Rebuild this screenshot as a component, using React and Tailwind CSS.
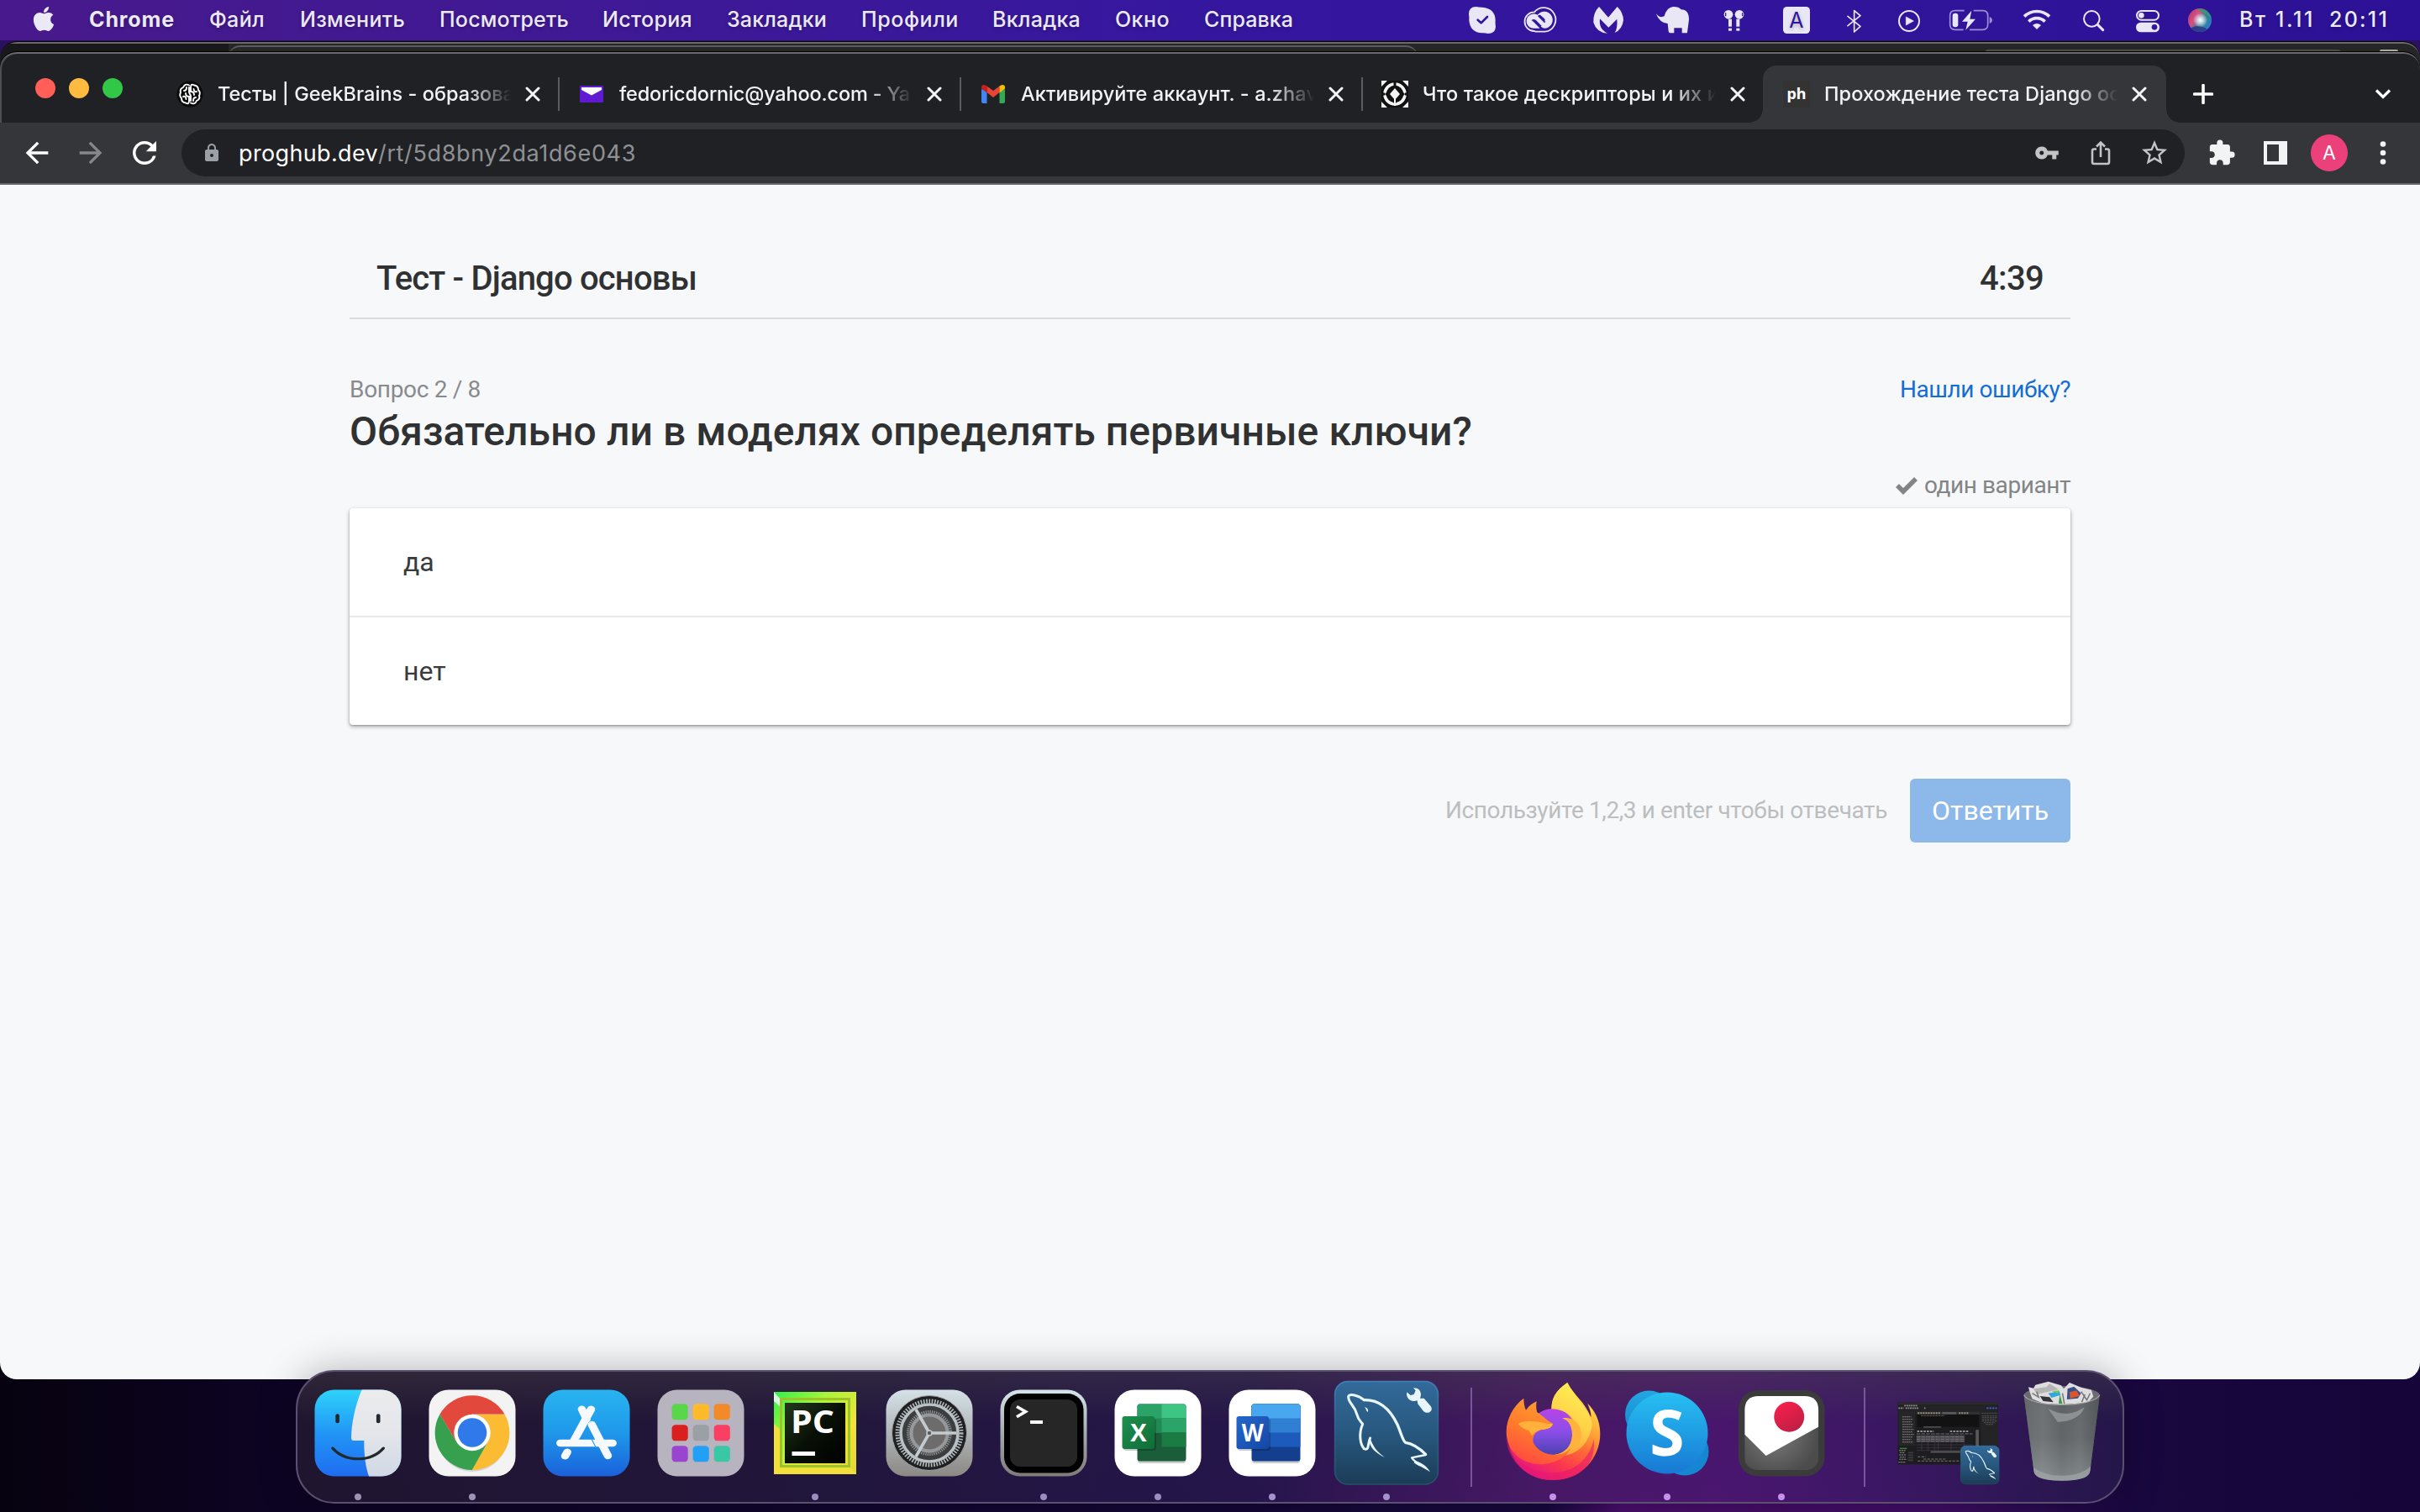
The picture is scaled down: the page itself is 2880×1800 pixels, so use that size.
import { useLayoutEffect, useRef, useState } from "react";
import { FaApple } from "react-icons/fa";
import {
  MdArrowBack,
  MdArrowForward,
  MdRefresh,
  MdLock,
  MdVpnKey,
  MdStarBorder,
  MdExtension,
} from "react-icons/md";

/* One line of text whose tracking is adjusted so that it fills `width` pixels. */
function Fit({ width, className = "", children }) {
  const ref = useRef(null);
  const [spacing, setSpacing] = useState(0);
  useLayoutEffect(() => {
    const natural = ref.current.getBoundingClientRect().width;
    const count = String(children).length;
    setSpacing((width - natural) / count);
  }, [width, children]);
  return (
    <span className={"block shrink-0 " + className} style={{ width }}>
      <span ref={ref} className="inline-block whitespace-pre" style={{ letterSpacing: spacing + "px" }}>
        {children}
      </span>
    </span>
  );
}

const MENU = [
  { t: "Chrome", w: 102, gap: 41, bold: true },
  { t: "Файл", w: 66, gap: 42 },
  { t: "Изменить", w: 125, gap: 41 },
  { t: "Посмотреть", w: 154, gap: 40 },
  { t: "История", w: 107, gap: 41 },
  { t: "Закладки", w: 119, gap: 41 },
  { t: "Профили", w: 116, gap: 40 },
  { t: "Вкладка", w: 105, gap: 41 },
  { t: "Окно", w: 65, gap: 41 },
  { t: "Справка", w: 106, gap: 0 },
];

/* Status icon cell; the view box uses screen coordinates. */
function Status({ x, w, o, children }) {
  return (
    <svg width={w} height="48" viewBox={`${x} 0 ${w} 48`} className="shrink-0">
      <g transform={`translate(${o} 0) scale(0.33333)`} fill="#e9e6f5">
        {children}
      </g>
    </svg>
  );
}

function MenuBar() {
  return (
    <div className="flex h-12 shrink-0 items-center bg-linear-to-r from-[#48198c] via-[#35179f] to-[#2c1196] font-['Inter',sans-serif] text-[25px] leading-[46px] text-[#ece9f6] [text-shadow:0_2px_4px_rgba(0,0,0,0.25)]">
      <FaApple className="mr-[39px] ml-[37px] h-[33px] w-[30px] shrink-0 -translate-y-[2px]" />
      {MENU.map((m) => (
        <div key={m.t} className="flex h-12 shrink-0">
          <Fit width={m.w} className={m.bold ? "font-bold" : "font-medium"}>
            {m.t}
          </Fit>
          <span style={{ width: m.gap }} />
        </div>
      ))}
      <div className="ml-auto flex h-12 w-[1150px] shrink-0 items-start">
        <Status x={1730} w={68} o={1740}>
          <path d="M24 50Q24 24 50 24Q60 26 72 26Q118 30 119 72Q118 84 120 96Q118 120 92 120Q82 117 72 118Q28 116 25 72Q26 62 24 50Z" />
          <path d="M56 71L68 82L90 60" fill="none" stroke="#3015a0" strokeWidth="8" strokeLinecap="round" strokeLinejoin="round" />
        </Status>
        <Status x={1798} w={76} o={1740}>
          <path d="M257 111A34 34 0 0 1 258 43A43 43 0 1 1 296 113H262Z" fill="none" stroke="#e9e6f5" strokeWidth="5.500" />
          <path d="M268 55A30 30 0 1 1 296 101Q288 101 282 95L262 75Q256 70 252 75L278 101H260A26 26 0 1 1 272 55L294 76Q299 72 294 67L279 53Z" />
          <path d="M296 80L272 56M282 94L262 74Q255 69 250 74" fill="none" stroke="#3015a0" strokeWidth="5" />
        </Status>
        <Status x={1874} w={78} o={1740}>
          <path d="M489 24L522 62L554 24Q575 44 576 72Q572 105 545 117Q556 100 553 68L523 98L492 67Q487 104 519 119Q480 116 469 80Q467 46 489 24Z" />
        </Status>
        <Status x={1952} w={78} o={1740}>
          <path d="M692 48Q705 66 722 58Q730 26 754 24Q775 24 782 34Q810 34 810 70L804 116Q804 118 800 118H785V100H757V118H743Q738 118 737 112L734 84Q705 82 692 48Z" />
        </Status>
        <Status x={2030} w={70} o={1740}>
          <circle cx="951" cy="52" r="16" />
          <circle cx="990" cy="52" r="16" />
          <rect x="951" y="68" width="12" height="27" />
          <rect x="979" y="68" width="12" height="27" />
          <rect x="951" y="101" width="12" height="9" />
          <rect x="979" y="101" width="12" height="9" />
          <path d="M941 46V58M1001 46V58" stroke="#3015a0" strokeWidth="4" />
        </Status>
        <Status x={2100} w={72} o={1740}>
          <rect x="1146" y="24" width="96" height="96" rx="14" />
          <text x="1194" y="99" textAnchor="middle" fontSize="75" fill="#3015a0" className="font-['Inter',sans-serif]">
            A
          </text>
        </Status>
        <Status x={2172} w={68} o={1740}>
          <path d="M1377 58L1422 94L1400 114V38L1422 56L1377 92" fill="none" stroke="#e9e6f5" strokeWidth="5" strokeLinejoin="round" strokeLinecap="round" />
        </Status>
        <Status x={2240} w={62} o={2230}>
          <circle cx="126" cy="75" r="36" fill="none" stroke="#e9e6f5" strokeWidth="6" />
          <path d="M115 60L142 75L115 90Z" strokeLinejoin="round" stroke="#e9e6f5" strokeWidth="2" />
        </Status>
        <Status x={2302} w={88} o={2230}>
          <path d="M323 38H290Q272 38 272 56V88Q272 106 290 106H320M356 38H389Q407 38 407 56V88Q407 106 389 106H342" fill="none" stroke="#9c8fd2" strokeWidth="5" />
          <path d="M413 60Q423 64 423 72Q423 80 413 84Z" fill="#9c8fd2" />
          <rect x="281" y="47" width="20" height="50" rx="9" />
          <path d="M349 38L315 77H335L328 107L363 68H343Z" />
        </Status>
        <Status x={2390} w={68} o={2230}>
          <g fill="none" stroke="#e9e6f5" strokeWidth="11">
            <path d="M537 59A64 64 0 0 1 627 59" />
            <path d="M553 77A41 41 0 0 1 611 77" />
          </g>
          <path d="M567 90Q582 78 597 90L582 105Z" />
        </Status>
        <Status x={2458} w={66} o={2230}>
          <circle cx="778" cy="67" r="28" fill="none" stroke="#e9e6f5" strokeWidth="6" />
          <path d="M799 88L818 107" stroke="#e9e6f5" strokeWidth="9" strokeLinecap="round" />
        </Status>
        <Status x={2524} w={63} o={2230}>
          <rect x="939" y="39" width="78" height="32" rx="16" fill="none" stroke="#e9e6f5" strokeWidth="6" />
          <circle cx="955" cy="55" r="10" />
          <rect x="936" y="80" width="84" height="35" rx="17" />
          <circle cx="1002" cy="97" r="10" fill="#3015a0" />
        </Status>
        <Status x={2587} w={78} o={2230}>
          <defs>
            <radialGradient id="siriGlow">
              <stop offset="0" stopColor="#fff" />
              <stop offset="0.35" stopColor="#e8f4ff" stopOpacity="0.8" />
              <stop offset="1" stopColor="#fff" stopOpacity="0" />
            </radialGradient>
            <linearGradient id="siriBody" x1="0" x2="1" y1="0.2" y2="0.8">
              <stop offset="0" stopColor="#b03a78" />
              <stop offset="0.3" stopColor="#d8507e" />
              <stop offset="0.6" stopColor="#2f7f8c" />
              <stop offset="1" stopColor="#2a7fd0" />
            </linearGradient>
          </defs>
          <circle cx="1164" cy="72" r="42" fill="url(#siriBody)" />
          <path d="M1150 34A42 42 0 0 1 1204 66Q1180 40 1150 34Z" fill="#2f9a76" />
          <path d="M1132 100A42 42 0 0 0 1190 104Q1160 84 1132 100Z" fill="#2b3f8c" />
          <circle cx="1166" cy="72" r="26" fill="url(#siriGlow)" />
        </Status>
        <Fit width={90} className="font-medium">Вт 1.11</Fit>
        <Fit width={71} className="ml-[17px] font-medium">20:11</Fit>
      </div>
    </div>
  );
}

function BackWindow() {
  return (
    <div className="h-10 shrink-0 bg-[#2b1060] pt-px">
      <div className="h-full overflow-hidden rounded-t-[20px] border-t border-black bg-[#262626]">
        <div className="flex h-full rounded-t-[20px] border-t-2 border-[#6a6a6a]">
          <div className="h-full w-[272px] bg-[#18181b]" />
          <div className="mt-[2px] h-full w-[1415px] rounded-t-[14px] border-t-2 border-[#5c5c5c] bg-[#272727]" />
          <div className="mt-[7px] ml-[675px] h-full w-[424px] rounded-t-[4px] bg-[#4c4c4c]" />
          <div className="mt-[7px] ml-[46px] h-full w-[22px] rounded-t-[2px] bg-[#aaaaaa]" />
        </div>
      </div>
    </div>
  );
}

function Brain() {
  return (
    <svg viewBox="0 0 32 32" className="size-8">
      <circle cx="16" cy="16" r="15.500" fill="#0b0b0c" />
      <g fill="none" stroke="#fff" strokeWidth="1.900" strokeLinecap="round">
        <path d="M15 5.500Q10 3 8 8Q3.500 10 5 14Q3 18 6 21Q6 26 11 26.500Q15 29 15 24V19Q11 19 11 15" />
        <path d="M17 26.500Q22 29 24 24Q28.500 22 27 18Q29 14 26 11Q26 6 21 5.500Q17 3 17 8V13Q21 13 21 17" />
        <path d="M9 12Q12 12 12 8M8 19Q11 18 11.500 22M23 20Q20 20 20 24M24 13Q21 14 20.500 10M15 8V14L17 18V24" />
      </g>
    </svg>
  );
}

function YahooMail() {
  return (
    <svg viewBox="0 0 32 32" className="size-8">
      <rect x="2" y="6" width="28" height="20" rx="1.500" fill="#5f1bd1" />
      <path d="M4 8H28V11L16 17.500L4 11Z" fill="#fff" />
    </svg>
  );
}

function Gmail() {
  return (
    <svg viewBox="0 0 32 32" className="size-8">
      <path d="M2 10V25Q2 27 4 27H8.500V13Z" fill="#4285f4" />
      <path d="M23.500 13V27H28Q30 27 30 25V10Z" fill="#34a853" />
      <path d="M8.500 13V6.500L16 12L23.500 6.500V14L16 20L8.500 14Z" fill="#ea4335" />
      <path d="M2 8Q2 5 5 5Q7 5 8.500 6.500V14.500L2 9.500Z" fill="#c5221f" />
      <path d="M30 8Q30 5 27 5Q25 5 23.500 6.500V14.500L30 9.500Z" fill="#fbbc04" />
    </svg>
  );
}

function Descriptor() {
  return (
    <svg viewBox="0 0 32 32" className="size-8">
      <rect width="32" height="32" fill="#111" />
      <path d="M0 0H7L0 7ZM32 0H25L32 7ZM0 32H7L0 25ZM32 32H25L32 25Z" fill="#f4f4f4" />
      <circle cx="16" cy="16" r="12" fill="none" stroke="#f4f4f4" strokeWidth="3.600" />
      <path d="M16 0V5M0 16H4M28 16H32" stroke="#111" strokeWidth="3" />
      <path d="M16 4L28 16L16 28L4 16Z" fill="#111" />
      <path d="M16 9L22 16L16 23L10 16Z" fill="#f4f4f4" />
      <path d="M16 22V30" stroke="#f4f4f4" strokeWidth="2" />
    </svg>
  );
}

function Proghub() {
  return (
    <span className="flex size-8 items-center justify-center bg-[#333333] pb-[3px] font-['Noto_Sans',sans-serif] text-[18px] leading-8 font-bold text-white">
      ph
    </span>
  );
}

function CloseIcon() {
  return (
    <svg viewBox="0 0 18 18" className="size-[18px] shrink-0">
      <path d="M2 2L16 16M16 2L2 16" stroke="#f3f4f5" strokeWidth="3" strokeLinecap="round" />
    </svg>
  );
}

const TABS = [
  { t: "Тесты | GeekBrains - образова", icon: <Brain /> },
  { t: "fedoricdornic@yahoo.com - Ya", icon: <YahooMail /> },
  { t: "Активируйте аккаунт. - a.zhav", icon: <Gmail /> },
  { t: "Что такое дескрипторы и их и", icon: <Descriptor /> },
];

function TabTitle({ children, width = 353 }) {
  return (
    <div className="ml-[17px] h-8 w-[353px] shrink-0 overflow-hidden [mask-image:linear-gradient(to_right,black_84%,transparent_99%)]">
      <Fit width={width} className="font-['Inter',sans-serif] text-[23.5px] leading-8 font-medium text-[#f1f3f4]">
        {children}
      </Fit>
    </div>
  );
}

function TabStrip() {
  return (
    <div className="flex h-[82px] w-full">
      <div className="flex w-[187px] shrink-0 gap-4 pt-[29px] pl-[42px]">
        <span className="size-6 rounded-full bg-[#ff5f57]" />
        <span className="size-6 rounded-full bg-[#febb40]" />
        <span className="size-6 rounded-full bg-[#33c748]" />
      </div>
      {TABS.map((tab, i) => (
        <div key={tab.t} className={(i < 3 ? "w-[478px]" : "w-[477px]") + " flex h-full shrink-0 items-center pt-3.5"}>
          <div className="flex h-10 w-full items-center pl-[23px]">
            {tab.icon}
            <TabTitle width={i === 1 ? 346 : 353}>{tab.t}</TabTitle>
            <span className="ml-[13px] flex">
              <CloseIcon />
            </span>
            {i < 3 && <span className="-mr-px ml-auto h-10 w-0.5 bg-[#5b5c60]" />}
          </div>
        </div>
      ))}
      <div className="flex h-full shrink-0 items-end">
        <span className="-ml-4 size-4 bg-[radial-gradient(circle_at_0_0,#202124_15.500px,#35363a_16px)]" />
        <div className="mt-3.5 flex h-[68px] w-[480px] items-center self-end rounded-t-2xl bg-[#35363a] pl-6">
          <Proghub />
          <TabTitle>Прохождение теста Django ос</TabTitle>
          <span className="ml-[13px] flex">
            <CloseIcon />
          </span>
        </div>
        <span className="size-4 bg-[radial-gradient(circle_at_100%_0,#202124_15.500px,#35363a_16px)]" />
      </div>
      <div className="flex flex-1 items-center justify-between pt-3.5 pr-[34px] pl-4">
        <svg viewBox="0 0 24 24" className="size-6">
          <path d="M12 1.500V22.500M1.500 12H22.500" stroke="#fff" strokeWidth="3.600" strokeLinecap="round" />
        </svg>
        <svg viewBox="0 0 20 14" className="h-3.5 w-5">
          <path d="M2 2.500L10 10.500L18 2.500" fill="none" stroke="#fff" strokeWidth="3.200" />
        </svg>
      </div>
    </div>
  );
}

function Toolbar() {
  return (
    <div className="flex h-[74px] w-full items-center border-b-2 border-[#66676a] bg-[#35363a] pl-6">
      <MdArrowBack className="size-10 text-white" />
      <MdArrowForward className="ml-6 size-10 text-[#86878a]" />
      <MdRefresh className="ml-[23px] size-[42px] text-white" />
      <div className="ml-[23px] flex h-14 w-[2384px] shrink-0 items-center rounded-full bg-[#202124]">
        <MdLock className="ml-6 size-6 shrink-0 text-[#9aa0a6]" />
        <div className="ml-5 flex pt-0.5 font-['Inter',sans-serif] text-[27px] leading-[54px]">
          <Fit width={166} className="text-white">proghub.dev</Fit>
          <Fit width={307} className="text-[#8f9194]">/rt/5d8bny2da1d6e043</Fit>
        </div>
        <div className="ml-auto flex items-center pr-[18px]">
          <MdVpnKey className="size-[30px] text-[#c3c4c6]" />
          <svg viewBox="0 0 32 32" className="ml-[33px] size-8" fill="none" stroke="#c3c4c6" strokeWidth="2.600">
            <path d="M11 11.500H8Q6 11.500 6 13.500V27Q6 29 8 29H24Q26 29 26 27V13.500Q26 11.500 24 11.500H21" />
            <path d="M16 21V4M11 8.500L16 3.500L21 8.500" />
          </svg>
          <MdStarBorder className="ml-[30px] size-9 text-[#c3c4c6]" />
        </div>
      </div>
      <MdExtension className="ml-[27px] size-[34px] shrink-0 text-[#f1f3f4]" />
      <svg viewBox="0 0 28 28" className="ml-[33px] size-7 shrink-0">
        <path d="M0 0H28V28H0ZM4 4V24H18V4Z" fill="#f1f3f4" fillRule="evenodd" />
      </svg>
      <span className="ml-7 flex size-11 shrink-0 items-center justify-center rounded-full bg-[#ec407a] font-['Inter',sans-serif] text-[23px] leading-none text-white">
        А
      </span>
      <svg viewBox="0 0 8 28" className="ml-[38px] h-7 w-2" fill="#f1f3f4">
        <circle cx="4" cy="3.500" r="3.300" />
        <circle cx="4" cy="14" r="3.300" />
        <circle cx="4" cy="24.500" r="3.300" />
      </svg>
    </div>
  );
}

function Quiz() {
  return (
    <main className="flex h-[1422px] w-full justify-center rounded-b-[20px] bg-[#f7f8fa] pt-[62px] font-['Roboto',sans-serif] text-[#303132]">
      <div className="flex w-[2048px] flex-col">
        <div className="flex h-[98px] items-center justify-between border-b-2 border-[#d7dcdf] px-8 pt-[3px] text-[40px] leading-[48px] font-medium">
          <Fit width={381}>Тест - Django основы</Fit>
          <Fit width={76}>4:39</Fit>
        </div>
        <div className="mt-16 flex h-10 items-center justify-between text-[28px] leading-10">
          <Fit width={156} className="text-[#888a8c]">Вопрос 2 / 8</Fit>
          <Fit width={203} className="text-[#146dd6]">Нашли ошибку?</Fit>
        </div>
        <h1 className="h-[60px] text-[48px] leading-[60px] font-medium">
          <Fit width={1336}>Обязательно ли в моделях определять первичные ключи?</Fit>
        </h1>
        <div className="mt-3.5 flex h-10 items-center justify-end text-[28px] leading-10 text-[#828486]">
          <svg viewBox="0 0 28 22" className="mr-[7px] h-[22px] w-7">
            <path d="M3 11L10 18L25 3" fill="none" stroke="#828486" strokeWidth="5.600" />
          </svg>
          <Fit width={174}>один вариант</Fit>
        </div>
        <div className="mt-[7px] flex flex-col rounded bg-white text-[32px] leading-[48px] text-[#3a3b3c] shadow-[0_2px_5px_rgba(0,0,0,0.32),0_1px_2px_rgba(0,0,0,0.2)]">
          <div className="flex h-[130px] items-center border-b-2 border-[#e6eaeb] px-16">да</div>
          <div className="flex h-32 items-center px-16">нет</div>
        </div>
        <div className="mt-16 flex h-[76px] items-center justify-end">
          <Fit width={526} className="text-[28px] leading-10 text-[#bcbdbf]">
            Используйте 1,2,3 и enter чтобы отвечать
          </Fit>
          <div className="ml-[27px] flex h-[76px] w-[191px] items-center justify-center rounded-md bg-[#8cb9ea] text-[32px] leading-[48px] text-white">
            <Fit width={139}>Ответить</Fit>
          </div>
        </div>
      </div>
    </main>
  );
}

/* Dock cell: view box in screen coordinates. */
function Cell({ x, w = 136, dot, children }) {
  return (
    <svg width={w} height="155" viewBox={`${x} 1633 ${w} 155`} className="shrink-0 overflow-visible">
      {children}
      {dot && <circle cx={x + w / 2} cy="1782" r="4" fill={dot} />}
    </svg>
  );
}

function Z({ o, children }) {
  return <g transform={`translate(${o} 1610) scale(0.38265 0.33333)`}>{children}</g>;
}

function Plate({ x, fill }) {
  return <rect x={x} y="1654.500" width="103" height="103" rx="23" fill={fill} />;
}

function Grad({ id, stops, x1 = 0, y1 = 0, x2 = 0, y2 = 1 }) {
  return (
    <linearGradient id={id} x1={x1} y1={y1} x2={x2} y2={y2}>
      {stops.map((c, i) => (
        <stop key={i} offset={i / (stops.length - 1)} stopColor={c} />
      ))}
    </linearGradient>
  );
}

function Dolphin() {
  return (
    <g>
      <rect x="26" y="44" width="368" height="367" rx="46" fill="url(#sqlBg)" stroke="url(#sqlEdge)" strokeWidth="5" />
      <g fill="none" stroke="#e9f7fd" strokeLinejoin="round" strokeLinecap="round">
        <path d="M130 110C110 92 78 86 74 98C74 122 96 128 104 160C110 184 120 188 125 196C110 230 116 268 130 284C150 294 142 262 152 246" strokeWidth="9" />
        <path d="M130 110C190 108 226 150 248 196C262 226 268 256 278 262C304 266 330 284 350 304" strokeWidth="10" />
        <path d="M350 306L300 316C312 334 330 338 346 350" strokeWidth="7" />
      </g>
      <path d="M150 240C162 280 180 298 204 315C170 300 152 280 148 256Z" fill="#e9f7fd" />
      <path d="M314 328C340 336 356 350 366 367C344 352 320 344 308 334Z" fill="#e9f7fd" />
      <path d="M131 136Q147 138 144 153Q138 150 137 143Q135 138 131 136Z" fill="#e9f7fd" />
      <path d="M306 67Q330 66 333 88Q333 98 330 104L344 104L368 132Q376 144 366 152Q354 160 342 150L322 124L320 112Q296 118 286 102Q280 92 283 82L296 93L308 90L314 76Z" fill="#e9f7fd" />
    </g>
  );
}

function Finder() {
  return (
    <Cell x={358} dot="#9f93b5">
      <defs>
        <Grad id="finBlue" stops={["#2ed3fb", "#2196f6", "#1f6cf0"]} />
        <Grad id="finWhite" stops={["#ececee", "#e4e6ea", "#cfd8e4"]} />
        <clipPath id="finClip">
          <rect x="374.500" y="1654.500" width="103" height="103" rx="23" />
        </clipPath>
      </defs>
      <Plate x={374.5} fill="url(#finBlue)" />
      <g clipPath="url(#finClip)">
        <Z o={340}>
          <path d="M238 130C215 190 204 260 204 306Q204 315 211 315H244C243 360 248 410 260 446H370V130Z" fill="url(#finWhite)" />
        </Z>
      </g>
      <Z o={340}>
        <rect x="155" y="220" width="12" height="33" rx="6" fill="#22282e" />
        <rect x="282" y="220" width="12" height="33" rx="6" fill="#22282e" />
        <path d="M146 342C185 393 265 393 304 342" fill="none" stroke="#22282e" strokeWidth="9" strokeLinecap="round" />
      </Z>
    </Cell>
  );
}

function Chrome() {
  return (
    <Cell x={494} dot="#9f93b5">
      <Plate x={510.5} fill="#f3f3f4" />
      <ellipse cx="562" cy="1708" rx="43" ry="44" fill="#000" opacity="0.12" />
      <path d="M562 1750A44.400 44.400 0 0 1 523.500 1683.500L543.200 1716.500L580.800 1716.500Z" fill="#36a04f" />
      <path d="M600.500 1683.500A44.400 44.400 0 0 1 562 1750L580.800 1716.500L562 1684Z" fill="#fbbb33" />
      <path d="M523.500 1683.500A44.400 44.400 0 0 1 600.500 1683.500H562L543.200 1716.500Z" fill="#e2483c" />
      <circle cx="562" cy="1705.500" r="21.700" fill="#fff" />
      <circle cx="562" cy="1705.500" r="17.300" fill="#3079ea" />
    </Cell>
  );
}

function AppStore() {
  return (
    <Cell x={630}>
      <defs>
        <Grad id="storeBg" stops={["#28b4f0", "#1f98ea", "#1b60da"]} />
      </defs>
      <Plate x={646.5} fill="url(#storeBg)" />
      <Z o={340}>
        <g stroke="#f6fafe" strokeWidth="25" strokeLinecap="round" fill="none">
          <path d="M921 203L936 238M1002 369L952 258" />
          <path d="M854 324H1017" />
          <path d="M950 203L896 316" />
          <path d="M876 356L869 370" />
        </g>
        <path d="M934 272L966 342" stroke="#219bea" strokeWidth="3" />
      </Z>
    </Cell>
  );
}

const PAD = [
  ["#5ad64a", "#fdbb2c", "#f28a2a"],
  ["#d9201f", "#9aa0a3", "#fb3f62"],
  ["#9a45cf", "#22a0f5", "#3ac7a5"],
];

function Launchpad() {
  return (
    <Cell x={766}>
      <Plate x={782.5} fill="#b7b4bf" />
      <Z o={340}>
        {PAD.map((row, r) =>
          row.map((c, k) => (
            <rect key={c} x={1201 + k * 65.5} y={184 + r * 75} width="50" height="57" rx="12" fill={c} />
          ))
        )}
      </Z>
    </Cell>
  );
}

function PyCharm() {
  return (
    <Cell x={902} dot="#9c8cc0">
      <defs>
        <Grad id="pyEdge" x2={1} stops={["#2ef04a", "#a8f63a", "#f1e337", "#e3d932"]} />
        <Grad id="pyIn" x2={1} stops={["#23391a", "#081006", "#000"]} />
      </defs>
      <rect x="921" y="1657" width="98" height="98" fill="url(#pyEdge)" />
      <path d="M921 1695L929 1702V1746L921 1755ZM921 1755L929 1746H1011L1019 1755Z" fill="#f2df3a" />
      <path d="M921 1657L930 1667V1676L921 1668Z" fill="#d9fbe0" />
      <rect x="929.500" y="1665.500" width="81" height="80" fill="none" stroke="#9cc22c" strokeWidth="3" />
      <rect x="934" y="1670" width="72" height="72" fill="url(#pyIn)" />
      <text x="941" y="1706" fontSize="38" fontWeight="700" fill="#fff" textLength="52" lengthAdjust="spacingAndGlyphs" className="font-['Open_Sans',sans-serif]">
        PC
      </text>
      <rect x="942.500" y="1728" width="27.500" height="5" fill="#fff" />
    </Cell>
  );
}

function Settings() {
  return (
    <Cell x={1038}>
      <defs>
        <Grad id="setBg" stops={["#d5e1e7", "#b0b5b8", "#8c8884"]} />
      </defs>
      <Plate x={1054.5} fill="url(#setBg)" />
      <circle cx="1106" cy="1706" r="44.500" fill="#1f2021" stroke="#9ea3a6" strokeWidth="1" />
      <circle cx="1106" cy="1706" r="38" fill="none" stroke="#b0b7bb" strokeWidth="5" strokeDasharray="1.700 1.600" />
      <circle cx="1106" cy="1706" r="34" fill="#3c3d3f" stroke="#b9c1c5" strokeWidth="3.600" />
      <circle cx="1106" cy="1706" r="25" fill="#3a3b3c" stroke="#8f9395" strokeWidth="4" strokeDasharray="1.300 1.200" />
      <circle cx="1106" cy="1706" r="21.500" fill="#6d6c6b" stroke="#96999b" strokeWidth="4" />
      <path d="M1106 1706H1138M1106 1706L1090 1678M1106 1706L1090 1734" stroke="#c4cbcf" strokeWidth="3.600" />
      <circle cx="1106" cy="1706" r="3" fill="#5b5d5f" stroke="#c4cbcf" strokeWidth="1.500" />
    </Cell>
  );
}

function Terminal() {
  return (
    <Cell x={1174} dot="#9c8cc0">
      <defs>
        <Grad id="termBg" stops={["#d3e5ea", "#a4aaac", "#7f7b78"]} />
      </defs>
      <Plate x={1190.5} fill="url(#termBg)" />
      <rect x="1195" y="1659" width="94.500" height="94.500" rx="19" fill="#000" />
      <rect x="1202" y="1666" width="80" height="80" rx="12" fill="#262626" />
      <path d="M1210 1674.500L1220.500 1680.500L1210 1686.800" fill="none" stroke="#fff" strokeWidth="3.600" />
      <rect x="1226" y="1691" width="15" height="4" fill="#fff" />
    </Cell>
  );
}

function Excel() {
  return (
    <Cell x={1310} dot="#9c8cc0">
      <defs>
        <Grad id="xlBadge" x2={1} stops={["#1e8f4f", "#0f6d38"]} />
        <clipPath id="xlClip">
          <rect x="1353.500" y="1671.500" width="58" height="68" rx="3" />
        </clipPath>
      </defs>
      <Plate x={1326.5} fill="#fff" />
      <rect x="1354" y="1674" width="57" height="68" rx="3" fill="#000" opacity="0.2" />
      <g clipPath="url(#xlClip)">
        <rect x="1353" y="1671" width="60" height="69" fill="#1b5d39" />
        <rect x="1353" y="1671" width="30" height="34.500" fill="#2aa268" />
        <rect x="1353" y="1688.500" width="30" height="17" fill="#218a52" />
        <rect x="1382.500" y="1671" width="30" height="17.500" fill="#3ec583" />
        <rect x="1382.500" y="1688.500" width="30" height="17" fill="#2aa468" />
        <rect x="1382.500" y="1705.500" width="30" height="17" fill="#1a7b43" />
      </g>
      <rect x="1337" y="1689" width="39" height="38" rx="3" fill="#000" opacity="0.2" />
      <rect x="1335.500" y="1686" width="38.500" height="39" rx="3" fill="url(#xlBadge)" />
      <text x="1354.800" y="1716" textAnchor="middle" fontSize="29" fontWeight="700" fill="#fff" className="font-['Open_Sans',sans-serif]">
        X
      </text>
    </Cell>
  );
}

function Word() {
  return (
    <Cell x={1446} dot="#a592cc">
      <defs>
        <Grad id="wdBadge" x2={1} stops={["#2468cb", "#1447a6"]} />
        <clipPath id="wdClip">
          <rect x="1489.500" y="1671.500" width="58" height="68" rx="3" />
        </clipPath>
      </defs>
      <Plate x={1462.5} fill="#fff" />
      <rect x="1490" y="1674" width="57" height="68" rx="3" fill="#000" opacity="0.2" />
      <g clipPath="url(#wdClip)">
        <rect x="1489" y="1671" width="60" height="69" fill="#143f8e" />
        <rect x="1489" y="1671" width="60" height="51.500" fill="#1c5bbb" />
        <rect x="1489" y="1671" width="60" height="34.500" fill="#2f7fd2" />
        <rect x="1489" y="1671" width="60" height="17.500" fill="#48a7ee" />
      </g>
      <rect x="1473" y="1689" width="39" height="38" rx="3" fill="#000" opacity="0.2" />
      <rect x="1471.500" y="1686" width="38.500" height="39" rx="3" fill="url(#wdBadge)" />
      <text x="1477.800" y="1716" fontSize="29" fontWeight="700" fill="#fff" textLength="26" lengthAdjust="spacingAndGlyphs" className="font-['Open_Sans',sans-serif]">
        W
      </text>
    </Cell>
  );
}

function Workbench() {
  return (
    <Cell x={1582} dot="#a592cc">
      <defs>
        <Grad id="sqlBg" stops={["#326a99", "#28587f", "#1b3c56"]} />
        <Grad id="sqlEdge" stops={["#3f7db5", "#2c5f85", "#25526a"]} />
      </defs>
      <g transform="translate(1580 1630) scale(0.33333)">
        <Dolphin />
      </g>
    </Cell>
  );
}

function Firefox() {
  return (
    <Cell x={1780} dot="#c691ec">
      <defs>
        <Grad id="ffBody" x1={0.85} y1={0.1} x2={0.3} y2={1} stops={["#ffe94f", "#ffb23a", "#ff6a36", "#fb3350", "#e31587"]} />
        <Grad id="ffHead" x1={0.6} x2={0.2} stops={["#ffa130", "#ff7a2c", "#ff4542"]} />
        <Grad id="ffTail" x1={0.6} x2={0.3} stops={["#fff056", "#ffd348", "#ff9a38"]} />
        <Grad id="ffShade" stops={["#b744e6", "#8c4ee8", "#4b42b0"]} />
      </defs>
      <g transform="translate(1580 1630) scale(0.33333)">
        <path d="M640 200C634 300 690 396 804 396C905 396 973 318 973 230C973 180 952 146 928 122C935 140 942 158 940 172C918 116 880 94 856 48C816 76 800 100 799 145L700 180Z" fill="url(#ffBody)" />
        <path d="M637 240C650 320 716 370 804 370C880 370 936 320 950 250C960 340 900 396 804 396C716 396 640 330 637 240Z" fill="#e6186f" opacity="0.6" />
        <circle cx="803" cy="223" r="82" fill="url(#ffShade)" />
        <path d="M838 175C862 182 874 206 873 236C872 276 846 300 812 306C860 318 930 290 944 200C946 160 880 100 856 48C812 78 800 104 799 142C840 142 868 162 878 182C866 176 852 172 838 175Z" fill="url(#ffTail)" />
        <path d="M838 175C862 182 878 210 873 240C870 276 846 300 812 306C856 310 904 282 906 238C906 204 890 180 860 176Z" fill="#ffb23d" />
        <path d="M700 104C664 130 638 176 638 226C640 300 700 340 760 340C800 340 850 320 870 280C840 318 760 316 734 262C730 240 742 222 762 216C788 214 802 206 804 194C786 186 770 168 748 154C744 142 744 128 746 115C730 122 718 132 708 146C702 134 700 118 700 104Z" fill="url(#ffHead)" />
        <path d="M680 196C700 180 740 186 762 190C780 194 794 196 804 195C802 208 788 214 762 216C746 222 736 226 730 238C724 230 722 226 720 220C704 216 690 208 680 196Z" fill="#ffb13b" />
      </g>
    </Cell>
  );
}

function Skype() {
  return (
    <Cell x={1916} dot="#c691ec">
      <defs>
        <Grad id="skBg" stops={["#27bff2", "#1f9de4", "#1878d3"]} />
        <Grad id="skBack" stops={["#22a8e2", "#167fc8"]} />
      </defs>
      <circle cx="1962.500" cy="1684" r="28.500" fill="url(#skBack)" />
      <circle cx="2005" cy="1728" r="28.500" fill="#1686d2" />
      <circle cx="1984" cy="1706" r="48.500" fill="url(#skBg)" />
      <text x="1984" y="1733" textAnchor="middle" fontSize="75" fontWeight="700" fill="#fff" className="font-['Open_Sans',sans-serif]">
        S
      </text>
    </Cell>
  );
}

function Viewer() {
  return (
    <Cell x={2052} dot="#c691ec">
      <defs>
        <radialGradient id="vwBg" cx="0.4" cy="0.5" r="0.6">
          <stop offset="0" stopColor="#7d7d7d" />
          <stop offset="1" stopColor="#4c4c4c" />
        </radialGradient>
        <Grad id="vwRed" x2={0.6} stops={["#ff1f4c", "#c01f45"]} />
      </defs>
      <rect x="2069" y="1655" width="102.500" height="102.500" rx="23" fill="#3b3b3c" />
      <Z o={1980}>
        <rect x="252" y="156" width="229" height="264" rx="40" fill="url(#vwBg)" />
        <path d="M252 206Q252 156 296 156H437Q481 156 481 206V266L318 369L252 293Z" fill="#fff" />
        <ellipse cx="390" cy="230" rx="47" ry="54" fill="url(#vwRed)" />
      </Z>
    </Cell>
  );
}

const ROWS = [0, 1, 2, 3, 4, 5, 6, 7, 8, 9, 10];

function Minimized() {
  return (
    <Cell x={2250}>
      <Z o={1980}>
        <rect x="728" y="178" width="312" height="222" fill="#1d1d1f" />
        <rect x="728" y="178" width="312" height="9" fill="#2c2c2e" />
        <rect x="728" y="187" width="312" height="34" fill="#232325" />
        <path d="M730 199H746M752 199H794M810 199H814M748 190H790" stroke="#8d8d90" strokeWidth="5" strokeDasharray="5 2" />
        <path d="M1004 199H1036" stroke="#3a62d8" strokeWidth="5" strokeDasharray="6 3" />
        <rect x="786" y="212" width="198" height="10" fill="#303033" />
        <path d="M790 217H862M918 217H950" stroke="#9c9478" strokeWidth="6" strokeDasharray="5 3" />
        <rect x="866" y="213" width="44" height="8" fill="#59595c" />
        <rect x="788" y="222" width="192" height="44" fill="#121213" />
        <path d="M800 226H874" stroke="#6d6d70" strokeWidth="2.500" strokeDasharray="7 2" />
        <rect x="808" y="264" width="54" height="5" fill="#4e4e50" />
        <rect x="730" y="211" width="52" height="122" fill="#262628" />
        {ROWS.map((r) => (
          <path key={r} d={`M742 ${230 + r * 9}H${770 + ((r * 5) % 9)}`} stroke="#86868a" strokeWidth="3" strokeDasharray="5 1.500" />
        ))}
        <rect x="986" y="211" width="54" height="122" fill="#242426" />
        <path d="M988 217H1038M990 227H1036M990 233H1036M990 239H1032M990 245H1036M996 251H1030M1002 257H1024" stroke="#58585c" strokeWidth="2.500" strokeDasharray="6 2" />
        <path d="M788 282H840M890 282H948" stroke="#8a8c90" strokeWidth="6" strokeDasharray="7 3" />
        <rect x="786" y="296" width="150" height="24" fill="#4a484d" />
        <path d="M786 291H960M786 302H934M786 310H934M786 318H934" stroke="#79777d" strokeWidth="2.500" strokeDasharray="12 3" />
        <path d="M802 294V352M822 294V352M842 294V352M854 294V352M894 294V352M934 294V352M786 330H962M786 340H962M786 350H962" stroke="#4a4456" strokeWidth="1.500" />
        <rect x="970" y="276" width="10" height="60" rx="4" fill="#58585b" />
        <rect x="830" y="353" width="92" height="5" fill="#626265" />
        <path d="M732 350H752M734 358H750M732 366H754M734 374H752M732 382H756M730 392H752" stroke="#8a8a8d" strokeWidth="3" strokeDasharray="6 1.500" />
        <path d="M734 343H756" stroke="#2f8a34" strokeWidth="4" />
        <path d="M760 358H776M760 367H776M760 376H776M760 385H776" stroke="#3d3d40" strokeWidth="5" />
        <path d="M790 373H816M808 381H880M790 388H920" stroke="#77777a" strokeWidth="3" strokeDasharray="8 4" />
      </Z>
      <g transform="translate(2330.200 1715.900) scale(0.1237)">
        <Dolphin />
      </g>
    </Cell>
  );
}

function Trash() {
  return (
    <Cell x={2386}>
      <defs>
        <Grad id="binBody" x2={1} y2={0} stops={["#7b8082", "#8d9294", "#6e7375", "#7d8284", "#565a5e"]} />
        <Grad id="binFade" stops={["#4d5053", "#54585a", "#8a8f92"]} />
      </defs>
      <Z o={1980}>
        <ellipse cx="1238" cy="153" rx="118" ry="33" fill="#6a6c72" />
        <path d="M1138 140L1134 124L1150 128L1156 116L1196 104L1236 118L1244 130L1262 108L1300 126L1330 134L1336 158L1318 180L1240 186L1180 182L1146 166Z" fill="#dedede" />
        <path d="M1150 130L1190 124L1200 112L1228 132L1196 140L1160 150Z" fill="#b5b5b5" />
        <path d="M1196 146L1230 138L1234 152L1206 162Z" fill="#2ea8df" />
        <path d="M1206 138L1230 136L1226 146Z" fill="#7ac943" />
        <path d="M1256 130L1276 122L1298 146L1288 164L1254 168Z" fill="#37508a" />
        <path d="M1262 142L1284 136L1294 156L1264 164Z" fill="#d9552c" />
        <path d="M1170 156L1200 160L1212 178L1180 174Z" fill="#38323a" />
        <path d="M1232 150L1240 184L1228 182Z" fill="#3d9a4b" />
        <path d="M1240 146L1246 184M1298 140L1316 170L1326 146M1146 146L1166 160L1160 140M1310 150L1300 178" stroke="#77777a" strokeWidth="4" fill="none" />
        <path d="M1120 152L1151 424Q1156 458 1238 458Q1320 458 1326 424L1356 152C1346 176 1290 187 1238 187C1186 187 1130 176 1120 152Z" fill="url(#binBody)" />
        <path d="M1120 152L1151 424Q1156 458 1238 458Q1320 458 1326 424L1356 152C1346 176 1290 187 1238 187C1186 187 1130 176 1120 152Z" fill="url(#binFade)" opacity="0.5" />
        <path d="M1195 200C1240 230 1280 220 1308 196C1300 230 1260 250 1225 248Z" fill="#a6abad" opacity="0.6" />
        <path d="M1150 410Q1180 440 1238 440Q1300 440 1328 406L1325 430Q1318 458 1238 458Q1158 458 1152 430Z" fill="#a3a8aa" opacity="0.7" />
        <path d="M1120 152C1130 176 1186 187 1238 187C1290 187 1346 176 1356 152" fill="none" stroke="#a9adb3" strokeWidth="3" />
      </Z>
    </Cell>
  );
}

function Divider({ first }) {
  return (
    <div className={(first ? "pl-1 " : "") + "flex h-full w-[62px] shrink-0 justify-center pt-[19px]"}>
      <span className="h-[118px] w-0.5 bg-[#79559a]" />
    </div>
  );
}

function Dock() {
  return (
    <div className="relative -mt-[11px] flex h-[159px] w-[2176px] shrink-0 self-center rounded-[46px] border-2 border-[#5c5070] bg-[linear-gradient(to_bottom,rgba(70,66,70,0.4),rgba(40,30,50,0.05)_38%,rgba(0,0,0,0)),linear-gradient(to_right,#20152f_0%,#21163c_30%,#25154b_52%,#471865_68%,#4a1670_78%,#3d1766_86%,#24164a_100%)] pl-1 shadow-[0_0_46px_rgba(0,0,0,0.28)]">
      <Finder />
      <Chrome />
      <AppStore />
      <Launchpad />
      <PyCharm />
      <Settings />
      <Terminal />
      <Excel />
      <Word />
      <Workbench />
      <Divider first />
      <Firefox />
      <Skype />
      <Viewer />
      <Divider />
      <Minimized />
      <Trash />
    </div>
  );
}

export default function App() {
  return (
    <div className="flex h-[1800px] w-[2880px] flex-col overflow-hidden bg-[linear-gradient(to_right,#07020f_0%,#0d0424_12%,#120631_40%,#17083e_64%,#4a0e6b_67%,#3f0d64_80%,#19073f_88%,#150538_100%)]">
      <MenuBar />
      <BackWindow />
      <div className="relative -mt-[27px] flex shrink-0 flex-col">
        <div className="overflow-hidden rounded-t-[20px] border-t border-black bg-[#202124]">
          <div className="flex flex-col overflow-hidden rounded-t-[20px] border-t-2 border-[#6b6b6d] shadow-[inset_2px_0_0_#4d4e51]">
            <TabStrip />
            <Toolbar />
          </div>
        </div>
        <Quiz />
      </div>
      <Dock />
    </div>
  );
}
